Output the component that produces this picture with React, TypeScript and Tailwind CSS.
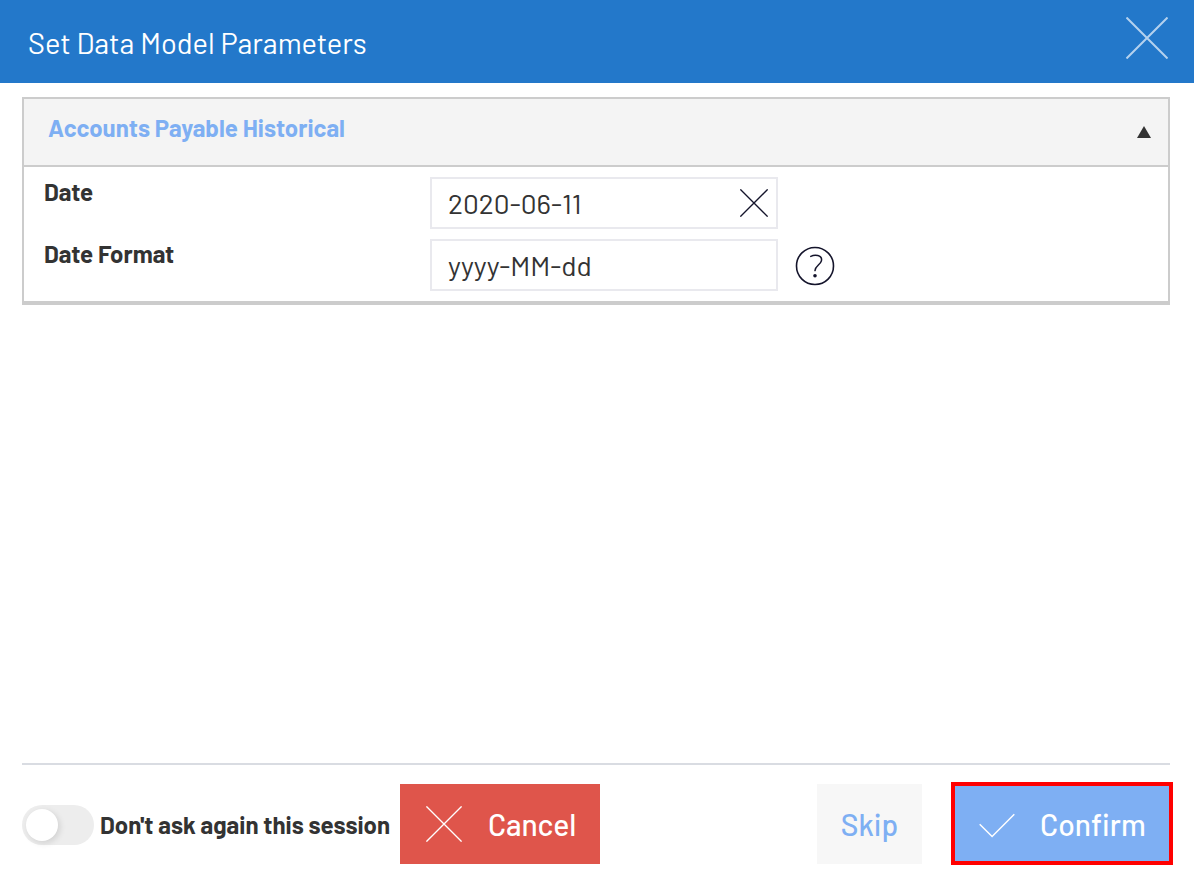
import { useState } from "react";

function CrossIcon({ className }: { className: string }) {
  return (
    <svg className={className} viewBox="0 0 42 42" fill="none" stroke="currentColor" aria-hidden="true">
      <path d="M0.5 0.5 L41.5 41.5 M41.5 0.5 L0.5 41.5" />
    </svg>
  );
}

function HelpIcon() {
  return (
    <svg className="size-10" viewBox="0 0 40 40" fill="none" stroke="currentColor" aria-hidden="true">
      <circle cx="20" cy="20" r="18.5" strokeWidth="1.6" />
      <path
        d="M15.8 10.4 C18 9.2 20.6 9 22.8 9.5 C25.6 10.2 27 12.2 26.4 14.8 C25.4 18.8 20.2 19.7 20 24.6"
        strokeWidth="1.5"
        strokeLinecap="round"
      />
      <circle cx="20" cy="29.8" r="1.8" fill="currentColor" stroke="none" />
    </svg>
  );
}

function App() {
  const [date, setDate] = useState("2020-06-11");
  const [format, setFormat] = useState("yyyy-MM-dd");
  const [open, setOpen] = useState(true);

  return (
    <div className="flex min-h-screen flex-col bg-white font-['Barlow','Roboto',sans-serif] text-[#333333]">
      <header className="flex h-[83px] items-center justify-between bg-[#2378ca] pr-6 pl-7 text-white">
        <h1 className="pt-0.5 text-[29px] leading-9">Set Data Model Parameters</h1>
        <button type="button" aria-label="Close" className="pb-2 text-[#b4d1ee]">
          <CrossIcon className="size-[46px] stroke-2 p-0.5" />
        </button>
      </header>

      <main className="mt-3.5 mr-6 ml-[22px] flex-1">
        <section className="border-2 border-b-4 border-[#cccccc]">
          <button
            type="button"
            aria-expanded={open}
            onClick={() => setOpen(!open)}
            className="flex h-[68px] w-full items-center justify-between border-b-2 border-[#cccccc] bg-[#f4f4f4] pr-4 pl-6"
          >
            <span className="pb-2 text-2xl font-bold text-[#7eaff3]">Accounts Payable Historical</span>
            <svg className="h-3 w-4" viewBox="0 0 16 12" aria-hidden="true">
              <path d="M8 0 L15 12 L1 12 Z" fill="#333333" />
            </svg>
          </button>

          {open && (
            <div className="flex flex-col gap-2.5 py-2.5 pl-5">
              <div className="flex">
                <label htmlFor="date" className="w-[386px] text-2xl leading-[30px] font-bold">Date</label>
                <div className="flex h-[52px] w-[348px] items-center border-2 border-[#e9e9ee] pr-2 pl-4">
                  <input
                    id="date"
                    type="text"
                    value={date}
                    onChange={(e) => setDate(e.target.value)}
                    className="min-w-0 flex-1 text-[28px] leading-9 outline-none"
                  />
                  <button type="button" aria-label="Clear date" onClick={() => setDate("")} className="text-[#14142b]">
                    <CrossIcon className="size-7 stroke-2" />
                  </button>
                </div>
              </div>

              <div className="flex">
                <label htmlFor="format" className="w-[386px] text-2xl leading-[30px] font-bold">Date Format</label>
                <div className="flex h-[52px] w-[348px] items-center border-2 border-[#e9e9ee] pr-2 pl-4">
                  <input
                    id="format"
                    type="text"
                    value={format}
                    onChange={(e) => setFormat(e.target.value)}
                    className="min-w-0 flex-1 text-[28px] leading-9 outline-none"
                  />
                </div>
                <button type="button" aria-label="Help" className="ml-[17px] pt-0.5 text-[#14142b]">
                  <HelpIcon />
                </button>
              </div>
            </div>
          )}
        </section>
      </main>

      <hr className="mr-6 ml-[22px] border-t-2 border-[#d9dce2]" />

      <footer className="flex items-center pt-[17px] pr-[21px] pb-4 pl-[22px]">
        <label className="flex w-[378px] items-center gap-1.5 pt-0.5 text-2xl font-bold whitespace-nowrap">
          <input
            type="checkbox"
            className="h-10 w-[72px] shrink-0 appearance-none rounded-full bg-[#ededed] p-1 before:block before:size-8 before:rounded-full before:bg-white before:shadow-[2px_2px_6px_rgba(0,0,0,0.12)] checked:bg-[#7eaff3] checked:before:ml-8"
          />
          Don't ask again this session
        </label>
        <button type="button" className="flex h-20 w-[200px] items-center bg-[#df554b] px-[26px] text-[30px] font-medium text-white">
          <CrossIcon className="mr-[26px] size-9 shrink-0 stroke-[1.6]" />
          <span className="pt-0.5">Cancel</span>
        </button>
        <button type="button" className="mr-[29px] ml-auto h-20 w-[105px] bg-[#f7f7f7] pt-0.5 text-[30px] font-medium text-[#7eaff3]">
          Skip
        </button>
        <button type="button" className="flex h-[83px] w-[222px] items-center border-4 border-[#ff0000] bg-[#7eaff3] pl-6 text-[30px] font-medium text-white">
          <svg className="mr-[25px] size-9 shrink-0" viewBox="0 0 36 36" fill="none" stroke="currentColor" aria-hidden="true">
            <path d="M0.7 18.2 L13.1 30.5 L35.3 8.3" strokeWidth="1.5" />
          </svg>
          <span className="pt-0.5">Confirm</span>
        </button>
      </footer>
    </div>
  );
}

export default App;
